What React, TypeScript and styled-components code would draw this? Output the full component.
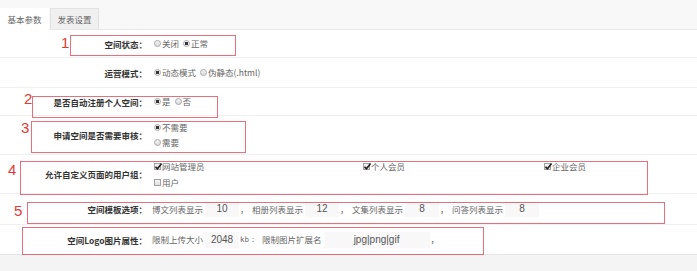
import React from "react";
import styled, { createGlobalStyle } from "styled-components";

const GlobalStyle = createGlobalStyle`
  html, body {
    margin: 0;
    padding: 0;
    background: #f4f4f4;
  }
  body {
    font-family: "Noto Sans CJK SC", "Liberation Sans", sans-serif;
    font-size: 8.5px;
    color: #666;
  }
`;

const Page = styled.div`
  position: relative;
  width: 697px;
  height: 271px;
  overflow: hidden;
`;

const TabBar = styled.div`
  display: flex;
  align-items: flex-end;
  height: 29px;
  background: #f8f8f8;
  border-bottom: 1px solid #e8e8e8;
`;

const Tab = styled.div<{ $active?: boolean }>`
  box-sizing: border-box;
  width: 49px;
  height: 22px;
  line-height: 20px;
  text-align: center;
  color: #666;
  margin-bottom: -1px;
  margin-right: 1px;
  background: ${(p) => (p.$active ? "#fff" : "#f0f0f0")};
  border: 1px solid ${(p) => (p.$active ? "#fff" : "#e2e2e2")};
  border-bottom-color: ${(p) => (p.$active ? "#fff" : "#e8e8e8")};
`;

const Form = styled.div`
  background: #fff;
  border-bottom: 1px solid #e6e6e6;
`;

const Row = styled.div<{ $h: number }>`
  display: flex;
  align-items: center;
  box-sizing: border-box;
  height: ${(p) => p.$h}px;
  border-bottom: 1px solid #f0f0f0;
  &:last-child {
    border-bottom: none;
  }
`;

const Label = styled.div`
  flex: none;
  width: 147px;
  text-align: right;
  font-weight: bold;
  color: #333;
`;

const Content = styled.div`
  flex: 1;
  display: flex;
  align-items: center;
  padding-left: 5px;
  line-height: 15px;
`;

const Stack = styled.div`
  display: flex;
  flex-direction: column;
`;

const Option = styled.span`
  display: inline-flex;
  align-items: center;
  margin-right: 2px;
  white-space: nowrap;
`;

const Radio = styled.span<{ $on?: boolean }>`
  box-sizing: border-box;
  display: inline-block;
  width: 7px;
  height: 7px;
  margin: 0 1px 0 2px;
  border-radius: 50%;
  border: 1px solid #a8a8a8;
  background: ${(p) =>
    p.$on
      ? "radial-gradient(circle, #333 0 1.6px, #eee 2px)"
      : "linear-gradient(#f4f4f4, #dcdcdc)"};
`;

const Box = styled.span`
  box-sizing: border-box;
  position: relative;
  display: inline-block;
  width: 7px;
  height: 7px;
  margin: 0 1px 0 2px;
  border: 1px solid #a0a0a0;
  background: linear-gradient(#f6f6f6, #dedede);
`;

const Tick = styled.svg`
  position: absolute;
  left: -1px;
  top: -2px;
`;

const CheckGrid = styled.div`
  display: grid;
  grid-template-columns: 209px 181px auto;
  row-gap: 1px;
  line-height: 15px;
`;

const Text = styled.span`
  white-space: nowrap;
`;

const Input = styled.span<{ $w: number }>`
  display: inline-block;
  width: ${(p) => p.$w}px;
  height: 16px;
  line-height: 16px;
  margin-left: 2px;
  background: #f8f8f8;
  text-align: center;
  font-family: "Liberation Sans", Arial, sans-serif;
  font-size: 10px;
  color: #555;
`;

const Sep = styled.span`
  display: inline-block;
  width: 13px;
  padding-left: 1px;
  box-sizing: border-box;
`;

const Unit = styled.span`
  display: inline-block;
  width: 23px;
  padding-left: 1px;
  box-sizing: border-box;
  font-family: "DejaVu Sans Mono", monospace;
  font-size: 7.5px;
`;

const Mark = styled.div<{ $x: number; $y: number; $w: number; $h: number }>`
  position: absolute;
  left: ${(p) => p.$x}px;
  top: ${(p) => p.$y}px;
  width: ${(p) => p.$w}px;
  height: ${(p) => p.$h}px;
  box-sizing: border-box;
  border: 1.5px solid rgba(222, 64, 80, 0.75);
  pointer-events: none;
`;

const Num = styled.span<{ $x: number; $y: number }>`
  position: absolute;
  left: ${(p) => p.$x}px;
  top: ${(p) => p.$y}px;
  font-family: "Liberation Sans", Arial, sans-serif;
  font-size: 15px;
  line-height: 1;
  color: #e23a36;
`;

const Check = ({ on, children }: { on?: boolean; children: React.ReactNode }) => (
  <Option>
    <Box>
      {on && (
        <Tick width="9" height="9" viewBox="0 0 9 9">
          <path d="M1.5 4.8 L3.4 6.8 L7.6 1.6" fill="none" stroke="#222" strokeWidth="1.6" />
        </Tick>
      )}
    </Box>
    {children}
  </Option>
);

const Choice = ({ on, children }: { on?: boolean; children: React.ReactNode }) => (
  <Option>
    <Radio $on={on} />
    {children}
  </Option>
);

const marks = [
  { n: "1", x: 70, y: 35, w: 166, h: 21, nx: 61, ny: 35 },
  { n: "2", x: 32, y: 96, w: 186, h: 22, nx: 24, ny: 91 },
  { n: "3", x: 31, y: 121, w: 215, h: 32, nx: 21, ny: 120 },
  { n: "4", x: 20, y: 161, w: 628, h: 34, nx: 8, ny: 162 },
  { n: "5", x: 27, y: 202, w: 638, h: 22, nx: 14, ny: 203 },
  { n: "", x: 22, y: 227, w: 462, h: 28, nx: 0, ny: 0 },
];

export default function App() {
  return (
    <Page>
      <GlobalStyle />
      <TabBar>
        <Tab $active>基本参数</Tab>
        <Tab>发表设置</Tab>
      </TabBar>
      <Form>
        <Row $h={28}>
          <Label>空间状态：</Label>
          <Content>
            <Choice>关闭</Choice>
            <Choice on>正常</Choice>
          </Content>
        </Row>
        <Row $h={30}>
          <Label>运营模式：</Label>
          <Content>
            <Choice on>动态模式</Choice>
            <Choice>伪静态(.html)</Choice>
          </Content>
        </Row>
        <Row $h={28}>
          <Label>是否自动注册个人空间：</Label>
          <Content>
            <Choice on>是</Choice>
            <Choice>否</Choice>
          </Content>
        </Row>
        <Row $h={39}>
          <Label>申请空间是否需要审核：</Label>
          <Content>
            <Stack>
              <Choice on>不需要</Choice>
              <Choice>需要</Choice>
            </Stack>
          </Content>
        </Row>
        <Row $h={39}>
          <Label>允许自定义页面的用户组：</Label>
          <Content>
            <CheckGrid>
              <Check on>网站管理员</Check>
              <Check on>个人会员</Check>
              <Check on>企业会员</Check>
              <Check>用户</Check>
            </CheckGrid>
          </Content>
        </Row>
        <Row $h={31}>
          <Label>空间模板选项：</Label>
          <Content>
            <Text>博文列表显示</Text>
            <Input $w={34}>10</Input>
            <Sep>，</Sep>
            <Text>相册列表显示</Text>
            <Input $w={34}>12</Input>
            <Sep>，</Sep>
            <Text>文集列表显示</Text>
            <Input $w={34}>8</Input>
            <Sep>，</Sep>
            <Text>问答列表显示</Text>
            <Input $w={34}>8</Input>
          </Content>
        </Row>
        <Row $h={29}>
          <Label>空间Logo图片属性：</Label>
          <Content>
            <Text>限制上传大小</Text>
            <Input $w={34}>2048</Input>
            <Unit>kb：</Unit>
            <Text>限制图片扩展名</Text>
            <Input $w={106}>jpg|png|gif</Input>
            <Sep>，</Sep>
          </Content>
        </Row>
      </Form>
      {marks.map((m, i) => (
        <React.Fragment key={i}>
          <Mark $x={m.x} $y={m.y} $w={m.w} $h={m.h} />
          {m.n && (
            <Num $x={m.nx} $y={m.ny}>
              {m.n}
            </Num>
          )}
        </React.Fragment>
      ))}
    </Page>
  );
}
